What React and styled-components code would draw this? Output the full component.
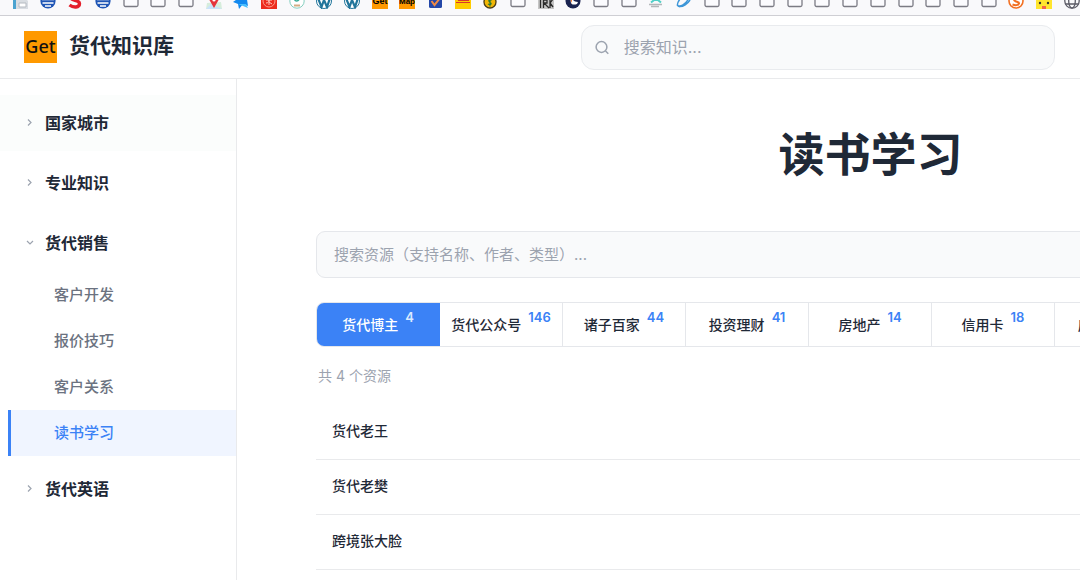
import styled, { createGlobalStyle } from "styled-components";

const GlobalStyle = createGlobalStyle`
    * {
        box-sizing: border-box;
    }
    body {
        margin: 0;
        overflow: hidden;
        background-color: #fff;
        color: #1f2937;
        font-family: Inter, "Noto Sans CJK SC", sans-serif;
    }
    button, input {
        font-family: inherit;
    }
`;

const Page = styled.div`
    display: flex;
    flex-direction: column;
    height: 100vh;
`;

const Bookmarks = styled.nav`
    display: flex;
    flex-shrink: 0;
    justify-content: space-between;
    align-items: flex-end;
    height: 16px;
    padding: 0 0 6px 12px;
    overflow: hidden;
    background-color: #f9f9fb;
    border-bottom: 1px solid #cfcfd4;
`;
const Bookmark = styled.a`
    flex: none;
    display: block;
    height: 16px;
    svg {
        display: block;
    }
`;

const Header = styled.header`
    display: flex;
    flex-shrink: 0;
    justify-content: space-between;
    align-items: center;
    height: 63px;
    padding: 0 25px 0 24px;
    border-bottom: 1px solid #e9eaec;
`;
const Brand = styled.a`
    display: flex;
    align-items: center;
    gap: 12px;
    color: #1f2937;
    text-decoration: none;
    font-size: 21px;
    font-weight: 700;
    line-height: 28px;
`;
const BrandName = styled.span`
    padding-bottom: 2px;
`;
const Logo = styled.span`
    width: 33px;
    height: 32px;
    background-color: #ff9900;
    color: #111;
    font-family: "Noto Sans", sans-serif;
    font-size: 18px;
    font-weight: 500;
    line-height: 30px;
    text-align: center;
`;
const SearchBox = styled.label`
    display: flex;
    align-items: center;
    gap: 14px;
    width: 46%;
    height: 45px;
    padding: 0 13px;
    background-color: #f9fafb;
    border: 1px solid #e9ebee;
    border-radius: 13px;
`;
const SearchInput = styled.input`
    flex: 1;
    min-width: 0;
    padding: 0;
    border: 0;
    outline: 0;
    background: transparent;
    color: #1f2937;
    font-size: 16px;
    &::placeholder {
        color: #9ca3af;
    }
`;

const Body = styled.div`
    display: flex;
    flex: 1;
    min-height: 0;
`;
const Sidebar = styled.nav`
    display: flex;
    flex-direction: column;
    flex: none;
    gap: 4px;
    width: 237px;
    padding-top: 16px;
    border-right: 1px solid #e9eaec;
`;
const Group = styled.button`
    display: flex;
    align-items: center;
    gap: 9px;
    width: 100%;
    height: 56px;
    padding: 0 24px 2px;
    border: 0;
    background-color: ${(props) => (props.$hover ? "#fbfdfc" : "transparent")};
    color: #1f2937;
    font-size: 16px;
    font-weight: 600;
    text-align: left;
`;
const SubList = styled.div`
    display: flex;
    flex-direction: column;
    padding: 1px 0 1px 8px;
`;
const SubLink = styled.a`
    height: 46px;
    padding-left: 43px;
    border-left: 3px solid ${(props) => (props.$active ? "#3b82f6" : "transparent")};
    background-color: ${(props) => (props.$active ? "#f0f5ff" : "transparent")};
    color: ${(props) => (props.$active ? "#3b82f6" : "#6b7280")};
    font-size: 15px;
    font-weight: 500;
    line-height: 46px;
    text-decoration: none;
`;

const Main = styled.main`
    flex: 1;
    min-width: 0;
    padding: 0 79px;
    overflow: hidden;
`;
const Content = styled.div`
    display: flex;
    flex-direction: column;
    min-width: 1109px;
`;
const Title = styled.h1`
    margin: 41px 0 43px;
    font-size: 46px;
    font-weight: 700;
    line-height: 68px;
    text-align: center;
`;
const ResourceSearch = styled.input`
    height: 47px;
    padding: 0 17px;
    border: 1px solid #e5e7eb;
    border-radius: 9px;
    outline: 0;
    background-color: #f9fafb;
    font-size: 15px;
    &::placeholder {
        color: #9ca3af;
    }
`;
const Tabs = styled.div`
    display: grid;
    grid-template-columns: repeat(9, 1fr);
    margin-top: 24px;
    height: 45px;
    border: 1px solid #e5e7eb;
    border-radius: 8px;
    overflow: hidden;
`;
const Tab = styled.button`
    display: flex;
    justify-content: center;
    align-items: center;
    gap: 7px;
    padding: 0 0 2px;
    border: 0;
    border-right: 1px solid ${(props) => (props.$active ? "#3b82f6" : "#e5e7eb")};
    background-color: ${(props) => (props.$active ? "#3b82f6" : "#fff")};
    color: ${(props) => (props.$active ? "#fff" : "#1f2937")};
    font-size: 14px;
    font-weight: 500;
    white-space: nowrap;
`;
const Count = styled.span`
    margin-bottom: 14px;
    color: ${(props) => (props.$active ? "#dbeafe" : "#3b82f6")};
    font-size: 13px;
    font-weight: 600;
    line-height: 16px;
`;
const Total = styled.p`
    margin: 19px 0;
    padding-left: 2px;
    color: #9ca3af;
    font-size: 14px;
    line-height: 20px;
`;
const Rows = styled.ul`
    margin: 0;
    padding: 0;
    list-style: none;
`;
const Row = styled.li`
    height: 55px;
    padding: 0 16px;
    border-bottom: 1px solid #e9eaec;
    font-size: 14px;
    font-weight: 500;
    line-height: 52px;
`;

const groups = [
    { name: "国家城市", hover: true },
    { name: "专业知识" },
    { name: "货代销售", items: ["客户开发", "报价技巧", "客户关系", "读书学习"] },
    { name: "货代英语" },
];

const tabs = [
    ["货代博主", 4],
    ["货代公众号", 146],
    ["诸子百家", 44],
    ["投资理财", 41],
    ["房地产", 14],
    ["信用卡", 18],
    ["房产博主", 12],
    ["电影", 25],
    ["书籍", 36],
];

const people = ["货代老王", "货代老樊", "跨境张大脸"];

const icons = {
    box: <rect x="1" y="0" width="14" height="13.500" rx="1.5" fill="#fbfbfe" stroke="#7b7b84" strokeWidth="1.3" />,
    doc: (
        <>
            <path d="M1 0h3v16H1z" fill="#4ba3d0" />
            <path d="M4 3h7l5 5v8H4z" fill="#d9dde2" />
            <path d="M7 10h7v4H7z" fill="#fff" stroke="#b5bac1" />
        </>
    ),
    bank: (
        <>
            <circle cx="8" cy="8" r="7.6" fill="#1f55b5" />
            <path d="M2 6.500h12M2.500 10h11M5 13h6" stroke="#fff" strokeWidth="1.5" />
        </>
    ),
    s: <path d="M12.5 3.5C8 .5 3 2 4 5.2c.8 2.8 8.5 1.5 8.5 5.3 0 4.3-6 4.500-10 1.5" fill="none" stroke="#e41e2b" strokeWidth="3.400" />,
    pin: (
        <>
            <path d="M1 10l14-1 1 7H0z" fill="#d6eddc" />
            <path d="M0 16l5-5 11 5z" fill="#c9e2fa" />
            <path d="M8 15L4 8a4.800 4.800 0 1 1 8 0z" fill="#e5343d" />
            <circle cx="8" cy="7" r="1.600" fill="#fff" />
        </>
    ),
    plane: (
        <>
            <path d="M0 9L13 0l2 13-5-2-4 5-1-5z" fill="#1389ef" />
            <path d="M5 11l8 0 2 4-5-2z" fill="#48bfff" />
        </>
    ),
    seal: (
        <>
            <rect width="16" height="16" fill="#ec2c1d" />
            <circle cx="8" cy="8" r="6" fill="none" stroke="#ff9d8c" />
            <path d="M5 7h6M8 5v7M5 10c2 0 3-1 3-3M8 9l3 2" stroke="#ffc6bb" fill="none" />
        </>
    ),
    mint: (
        <>
            <circle cx="8" cy="8" r="7.2" fill="#fff" stroke="#86cfc0" />
            <path d="M10.500 5c-1 4-5 4-5 0" fill="none" stroke="#35aa94" strokeWidth="1.6" />
            <path d="M5 12.500h6" stroke="#d5ac83" strokeWidth="2" />
        </>
    ),
    wp: (
        <>
            <circle cx="8" cy="8" r="7.5" fill="#fff" stroke="#21759b" strokeWidth="1" />
            <path d="M2 5l3.500 9L8 7l3 7 3-9" fill="none" stroke="#21759b" strokeWidth="2.200" />
        </>
    ),
    get: (
        <>
            <rect width="16" height="16" fill="#ff9900" />
            <text x="8" y="11" textAnchor="middle" fontSize="9" fontWeight="700" fontFamily="Liberation Sans">Get</text>
        </>
    ),
    map: (
        <>
            <rect width="16" height="16" fill="#ff9900" />
            <text x="8" y="11" textAnchor="middle" fontSize="8" fontWeight="700" fontFamily="Liberation Sans">Map</text>
        </>
    ),
    check: (
        <>
            <rect x="2" y="1" width="13" height="14" rx="1.5" fill="#2447a8" />
            <path d="M4.5 8l3 4L13 5" fill="none" stroke="#ef8a45" strokeWidth="2" />
        </>
    ),
    dhl: (
        <>
            <rect width="16" height="16" fill="#ffcc00" />
            <path d="M1 9.5h14M3 7.5h11" stroke="#d9372b" strokeWidth="1.2" />
        </>
    ),
    coin: (
        <>
            <circle cx="8" cy="9" r="6" fill="#f2b705" stroke="#4b3c14" strokeWidth="1.3" />
            <path d="M10 7c-3-1.3-4 .8-2 2.2s1 3.2-2 1.800M8 5v8.500" fill="none" stroke="#2e7a31" strokeWidth="1.3" />
        </>
    ),
    rk: (
        <>
            <rect width="16" height="16" fill="#c5c5c5" />
            <path d="M2.500 6v9M5.500 6v9M6 7h3v3H6l5 5M12 5v10M15 6l-3 4 3 4" fill="none" stroke="#2b2b2b" strokeWidth="1.3" />
        </>
    ),
    orb: (
        <>
            <circle cx="8" cy="8" r="7.5" fill="#1b2450" />
            <path d="M12 11c-6 2-8-2-5-8 0 4 2 6 6 6z" fill="#fff" />
            <path d="M4 4l3 6 0-7z" fill="#ef7a35" />
        </>
    ),
    teal: (
        <>
            <path d="M3 9.500l5-4 5 4M8 5v3" fill="none" stroke="#52cfc7" strokeWidth="2" />
            <path d="M1 11.500h13M3 13.500h8" stroke="#b4b7b9" strokeWidth="1.3" />
        </>
    ),
    swoosh: <path d="M4 6c-8 11 5 9 10 1M1 12c3 3 9-1 12-7" fill="none" stroke="#3d96d8" strokeWidth="1.5" />,
    sogou: (
        <>
            <circle cx="8" cy="8" r="7" fill="#fff" stroke="#f27022" strokeWidth="1.6" />
            <path d="M11 6C8 4 4.500 5.500 6.500 7.500s5 1 4.500 3-4 2-6.500 1" fill="none" stroke="#f27022" strokeWidth="2" />
        </>
    ),
    duck: (
        <>
            <rect width="16" height="16" fill="#ffe52e" />
            <circle cx="4" cy="10" r="1.2" fill="#333" />
            <circle cx="12" cy="10" r="1.2" fill="#333" />
            <rect x="6" y="13" width="4" height="3" fill="#f3644a" />
        </>
    ),
    globe: (
        <g fill="none" stroke="#5b5b66" strokeWidth="1.3">
            <circle cx="8" cy="8" r="7.2" />
            <ellipse cx="8" cy="8" rx="3.3" ry="7.2" />
            <path d="M1 6h14M1.500 11h13" />
        </g>
    ),
};

const bookmarks = [
    "doc", "bank", "s", "bank", "box", "box", "box", "pin", "plane", "seal",
    "mint", "wp", "wp", "get", "map", "check", "dhl", "coin", "box", "rk",
    "orb", "box", "box", "teal", "swoosh", "box", "box", "box", "box", "box",
    "box", "box", "box", "box", "box", "box", "sogou", "duck", "globe",
];

const Chevron = ({ open }) => (
    <svg width="12" height="12" viewBox="0 0 12 12" fill="none" stroke="#9ca3af" strokeWidth="1.2">
        <path d={open ? "M3 5l3 3 3-3" : "M4 3.500l3 3-3 3"} />
    </svg>
);

export default () => {
    return (
        <Page>
            <GlobalStyle />
            <Bookmarks aria-label="书签">
                {bookmarks.map((name, i) => (
                    <Bookmark key={i} href="#" aria-label={name}>
                        <svg width="16" height="16" viewBox="0 0 16 16">{icons[name]}</svg>
                    </Bookmark>
                ))}
            </Bookmarks>
            <Header>
                <Brand href="#">
                    <Logo>Get</Logo>
                    <BrandName>货代知识库</BrandName>
                </Brand>
                <SearchBox>
                    <svg width="15" height="15" viewBox="0 0 15 15" fill="none" stroke="#9ca3af" strokeWidth="1.5">
                        <circle cx="6.500" cy="7" r="5.400" />
                        <path d="M10.500 11l2.800 2.800" />
                    </svg>
                    <SearchInput type="text" placeholder="搜索知识..." aria-label="搜索知识" />
                </SearchBox>
            </Header>
            <Body>
                <Sidebar>
                    {groups.map((group) => (
                        <div key={group.name}>
                            <Group $hover={group.hover} aria-expanded={!!group.items}>
                                <Chevron open={!!group.items} />
                                {group.name}
                            </Group>
                            {group.items && (
                                <SubList>
                                    {group.items.map((item) => (
                                        <SubLink key={item} href="#" $active={item === "读书学习"}>
                                            {item}
                                        </SubLink>
                                    ))}
                                </SubList>
                            )}
                        </div>
                    ))}
                </Sidebar>
                <Main>
                    <Content>
                        <Title>读书学习</Title>
                        <ResourceSearch
                            type="text"
                            placeholder="搜索资源（支持名称、作者、类型）..."
                            aria-label="搜索资源"
                        />
                        <Tabs>
                            {tabs.map(([name, count], i) => (
                                <Tab key={name} $active={i === 0}>
                                    {name}
                                    <Count $active={i === 0}>{count}</Count>
                                </Tab>
                            ))}
                        </Tabs>
                        <Total>共 4 个资源</Total>
                        <Rows>
                            {people.map((name) => (
                                <Row key={name}>{name}</Row>
                            ))}
                        </Rows>
                    </Content>
                </Main>
            </Body>
        </Page>
    );
};
